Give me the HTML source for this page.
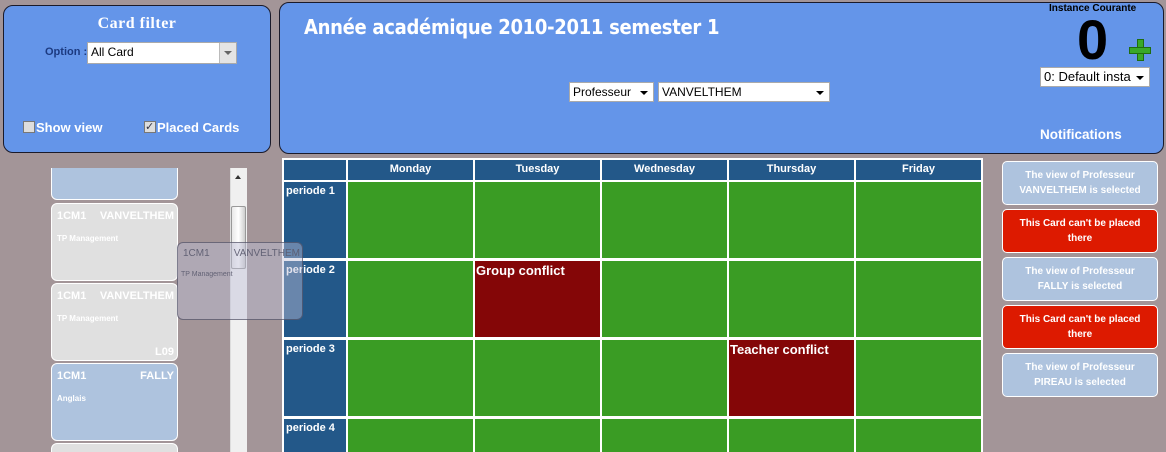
<!DOCTYPE html>
<html style="overflow:hidden;width:1166px;height:452px"><head><meta charset="utf-8"><style>
*{margin:0;padding:0;box-sizing:border-box}
body{width:1166px;height:452px;overflow:hidden;background:#a39598;position:relative;font-family:"Liberation Sans",Arial,sans-serif}
.a{position:absolute}
.panel{background:#6495e9;border:1px solid #1a1a2a;border-radius:10px}
.sel{background:#fff;border:1px solid #aaa;font-size:12px;color:#000;padding:1px 3px;height:20px;line-height:16px}
.arr{position:absolute;right:5px;top:8px;width:0;height:0;border-left:4px solid transparent;border-right:4px solid transparent;border-top:4px solid #000}
.h{background:#235889;color:#fff;font-size:11px;font-weight:bold;text-align:center;line-height:19px}
.p{background:#235889;color:#fff;font-size:11px;font-weight:bold;padding:3px 2px}
.g{background:#3a9c24}
.r{background:#840607;color:#fff;font-size:13px;font-weight:bold;padding:2px 1px}
.card{border:1px solid #fff;border-radius:6px;color:#fff;font-size:11px;font-weight:bold;width:127px;height:78px}
.card .t{position:absolute;top:6px;left:5px}
.card .n{position:absolute;top:6px;right:3px}
.card .s{position:absolute;top:30px;left:5px;font-size:8px}
.nt{left:1002px;width:156px;height:44px;border:1px solid #fff;border-radius:5px;color:#fff;font-size:10px;font-weight:bold;text-align:center;display:flex;align-items:center;justify-content:center;line-height:15px}
</style></head><body>
<div class="a panel" style="left:3px;top:5px;width:268px;height:148px"></div>
<div class="a" style="left:3px;top:15px;width:268px;text-align:center;color:#fff;font-family:'Liberation Serif',serif;font-size:16px;font-weight:bold;letter-spacing:0.5px">Card filter</div>
<div class="a" style="left:45px;top:46px;color:#1c3a80;font-size:11px;font-weight:bold">Option :</div>
<div class="a sel" style="left:87px;top:42px;width:150px;height:22px">All Card<div class="a" style="right:0;top:0;width:17px;height:20px;background:#e4e4e4;border-left:1px solid #bbb"></div><div class="arr" style="right:4px;top:8px;border-top-color:#666"></div></div>
<div class="a" style="left:23px;top:121px;width:12px;height:12px;background:#ddd;border:1px solid #777"></div>
<div class="a" style="left:36px;top:120px;color:#fff;font-size:13px;font-weight:bold">Show view</div>
<div class="a" style="left:144px;top:121px;width:12px;height:12px;background:#ddd;border:1px solid #777;font-size:11px;line-height:10px;color:#334">✓</div>
<div class="a" style="left:157px;top:120px;color:#fff;font-size:13px;font-weight:bold">Placed Cards</div>

<div class="a panel" style="left:279px;top:2px;width:885px;height:152px"></div>
<div class="a" style="left:304px;top:15px;color:#fff;font-size:20px;font-weight:bold;font-family:'DejaVu Sans Condensed','DejaVu Sans',sans-serif;letter-spacing:-0.3px">Année académique 2010-2011 semester 1</div>
<div class="a sel" style="left:569px;top:82px;width:85px">Professeur<div class="arr"></div></div>
<div class="a sel" style="left:658px;top:82px;width:172px">VANVELTHEM<div class="arr"></div></div>
<div class="a" style="left:1049px;top:3px;font-size:10px;font-weight:bold">Instance Courante</div>
<div class="a" style="left:1077px;top:10px;font-size:56px;font-weight:bold;line-height:60px">0</div>
<div class="a" style="left:1129px;top:39px;width:22px;height:22px"><div class="a" style="left:8px;top:0;width:7px;height:22px;background:#39a82a;border:1px solid #1f6d10"></div><div class="a" style="left:0;top:8px;width:22px;height:7px;background:#39a82a;border:1px solid #1f6d10"></div><div class="a" style="left:9px;top:9px;width:5px;height:5px;background:#39a82a"></div></div>
<div class="a sel" style="left:1040px;top:67px;width:110px;font-size:13px">0: Default insta<div class="arr"></div></div>
<div class="a" style="left:1040px;top:127px;color:#fff;font-size:13.5px;font-weight:bold">Notifications</div>

<div class="a" style="left:40px;top:168px;width:150px;height:284px;overflow:hidden">
<div class="a card" style="left:11px;top:-46px;background:#aec3de"></div>
<div class="a card" style="left:11px;top:35px;background:#e0e0e0"><span class="t">1CM1</span><span class="n">VANVELTHEM</span><span class="s">TP Management</span></div>
<div class="a card" style="left:11px;top:115px;background:#e0e0e0"><span class="t">1CM1</span><span class="n">VANVELTHEM</span><span class="s">TP Management</span><span class="a" style="right:3px;bottom:2px">L09</span></div>
<div class="a card" style="left:11px;top:195px;background:#aec3de"><span class="t">1CM1</span><span class="n">FALLY</span><span class="s">Anglais</span></div>
<div class="a card" style="left:11px;top:275px;background:#e0e0e0"></div>
</div>
<div class="a" style="left:230px;top:168px;width:17px;height:284px;background:#f0f0f0;border-left:1px solid #ddd"></div>
<div class="a" style="left:235px;top:175px;width:0;height:0;border-left:3px solid transparent;border-right:3px solid transparent;border-bottom:4px solid #333"></div>
<div class="a" style="left:231px;top:206px;width:15px;height:63px;background:linear-gradient(90deg,#e8e8e8,#fff,#ccc);border:1px solid #999;border-radius:2px"></div>

<div class="a" style="left:282px;top:158px;width:701px;height:294px;background:#fff"></div>
<div class="a h" style="left:284px;top:160px;width:62px;height:20px"></div>
<div class="a h" style="left:348px;top:160px;width:125px;height:20px">Monday</div>
<div class="a h" style="left:475px;top:160px;width:125px;height:20px">Tuesday</div>
<div class="a h" style="left:602px;top:160px;width:125px;height:20px">Wednesday</div>
<div class="a h" style="left:729px;top:160px;width:125px;height:20px">Thursday</div>
<div class="a h" style="left:856px;top:160px;width:125px;height:20px">Friday</div>

<div class="a p" style="left:284px;top:182px;width:62px;height:76px">periode 1</div>
<div class="a p" style="left:284px;top:261px;width:62px;height:76px">periode 2</div>
<div class="a p" style="left:284px;top:340px;width:62px;height:76px">periode 3</div>
<div class="a p" style="left:284px;top:419px;width:62px;height:33px">periode 4</div>

<div class="a g" style="left:348px;top:182px;width:125px;height:76px"></div>
<div class="a g" style="left:475px;top:182px;width:125px;height:76px"></div>
<div class="a g" style="left:602px;top:182px;width:125px;height:76px"></div>
<div class="a g" style="left:729px;top:182px;width:125px;height:76px"></div>
<div class="a g" style="left:856px;top:182px;width:125px;height:76px"></div>

<div class="a g" style="left:348px;top:261px;width:125px;height:76px"></div>
<div class="a r" style="left:475px;top:261px;width:125px;height:76px">Group conflict</div>
<div class="a g" style="left:602px;top:261px;width:125px;height:76px"></div>
<div class="a g" style="left:729px;top:261px;width:125px;height:76px"></div>
<div class="a g" style="left:856px;top:261px;width:125px;height:76px"></div>

<div class="a g" style="left:348px;top:340px;width:125px;height:76px"></div>
<div class="a g" style="left:475px;top:340px;width:125px;height:76px"></div>
<div class="a g" style="left:602px;top:340px;width:125px;height:76px"></div>
<div class="a r" style="left:729px;top:340px;width:125px;height:76px">Teacher conflict</div>
<div class="a g" style="left:856px;top:340px;width:125px;height:76px"></div>

<div class="a g" style="left:348px;top:419px;width:125px;height:33px"></div>
<div class="a g" style="left:475px;top:419px;width:125px;height:33px"></div>
<div class="a g" style="left:602px;top:419px;width:125px;height:33px"></div>
<div class="a g" style="left:729px;top:419px;width:125px;height:33px"></div>
<div class="a g" style="left:856px;top:419px;width:125px;height:33px"></div>

<div class="a" style="left:177px;top:242px;width:126px;height:78px;background:rgba(190,190,215,0.45);border:1px solid rgba(60,60,80,0.6);border-radius:6px;color:rgba(90,90,110,0.9);font-size:10px">
<span class="a" style="left:5px;top:5px">1CM1</span><span class="a" style="right:2px;top:5px">VANVELTHEM</span><span class="a" style="left:3px;top:28px;font-size:7px">TP Management</span></div>

<div class="a nt" style="top:161px;background:#aec3de">The view of Professeur<br>VANVELTHEM is selected</div>
<div class="a nt" style="top:209px;background:#dd1a00">This Card can't be placed<br>there</div>
<div class="a nt" style="top:257px;background:#aec3de">The view of Professeur<br>FALLY is selected</div>
<div class="a nt" style="top:305px;background:#dd1a00">This Card can't be placed<br>there</div>
<div class="a nt" style="top:353px;background:#aec3de">The view of Professeur<br>PIREAU is selected</div>
</body></html>
